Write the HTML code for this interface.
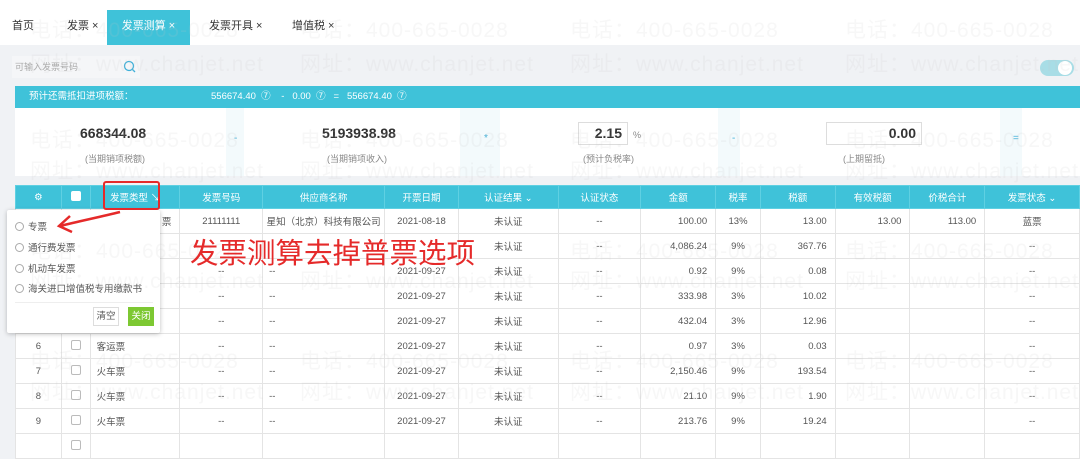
<!DOCTYPE html>
<html><head><meta charset="utf-8"><style>
*{margin:0;padding:0;box-sizing:border-box}
body{width:1080px;height:439px;overflow:hidden;background:#f0f2f5;font-family:"Liberation Sans","Noto Sans CJK SC",sans-serif;font-size:10px;color:#555;position:relative}
.a{position:absolute}
.tabs{top:0;left:0;width:1080px;height:45px;background:#fff}
.tab{top:10px;height:35px;line-height:32px;font-size:11px;color:#333}
.wm{position:absolute;color:rgba(200,200,200,.14);font-size:21px;white-space:nowrap;letter-spacing:1px;z-index:5;pointer-events:none}
table{position:absolute;left:15px;top:185px;border-collapse:collapse;table-layout:fixed;background:#fff}
td,th{height:25px;border:1px solid #e4e4e4;font-weight:normal;text-align:center;font-size:9.5px;color:#555;white-space:nowrap;overflow:hidden}
th{background:#3fc2d9;color:#fff;height:23px;border-color:#5fd0e2}
td.r{text-align:right;padding-right:8px}
td.l{text-align:left;padding-left:6px}
.cb{display:inline-block;width:10px;height:10px;border:1px solid #bbb;border-radius:2px}
.rad{display:inline-block;width:9px;height:9px;border:1px solid #aaa;border-radius:50%;vertical-align:-1px;margin-right:4px}
</style></head><body>
<div class="a tabs"></div>
<div class="a tab" style="left:12px">首页</div>
<div class="a tab" style="left:67px">发票 ×</div>
<div class="a tab" style="left:107px;width:83px;background:#3fc2d9;color:#fff;text-align:center">发票测算 ×</div>
<div class="a tab" style="left:209px">发票开具 ×</div>
<div class="a tab" style="left:292px">增值税 ×</div>
<div class="a" style="left:12px;top:56px;width:128px;height:22px;background:#f5f6f8;font-size:9px;color:#aaa;line-height:22px;padding-left:3px">可输入发票号码</div>
<svg class="a" style="left:123px;top:60px" width="13" height="13"><circle cx="6" cy="6" r="4.5" fill="none" stroke="#3fb0d9" stroke-width="1.3"/><line x1="9" y1="9" x2="12" y2="12" stroke="#3fb0d9" stroke-width="1.3"/></svg>
<div class="a" style="left:1040px;top:60px;width:34px;height:16px;border-radius:8px;background:#a8dde6"></div>
<div class="a" style="left:1058px;top:61px;width:14px;height:14px;border-radius:50%;background:#fff"></div>
<div class="a" style="left:15px;top:86px;width:1065px;height:22px;background:#3fc2d9;color:#fff;font-size:9.5px;line-height:22px">
<span class="a" style="left:14px">预计还需抵扣进项税额：</span><span class="a" style="left:196px">556674.40 &nbsp;⑦ &nbsp;&nbsp;&nbsp;- &nbsp;&nbsp;0.00 &nbsp;⑦ &nbsp;&nbsp;= &nbsp;&nbsp;556674.40 &nbsp;⑦</span></div>
<div class="a" style="left:15px;top:108px;width:1065px;height:68px;background:#fff"></div>
<div class="a" style="left:226px;top:108px;width:18px;height:68px;background:#f3fafc"></div>
<div class="a" style="left:460px;top:108px;width:40px;height:68px;background:#f3fafc"></div>
<div class="a" style="left:718px;top:108px;width:22px;height:68px;background:#f3fafc"></div>
<div class="a" style="left:1000px;top:108px;width:22px;height:68px;background:#f3fafc"></div>
<div class="a" style="left:80px;top:125px;font-size:14px;font-weight:bold;color:#333">668344.08</div>
<div class="a" style="left:85px;top:152px;font-size:9px;color:#888">(当期销项税额)</div>
<div class="a" style="left:234px;top:133px;color:#3fb0d9">-</div>
<div class="a" style="left:322px;top:125px;font-size:14px;font-weight:bold;color:#333">5193938.98</div>
<div class="a" style="left:327px;top:152px;font-size:9px;color:#888">(当期销项收入)</div>
<div class="a" style="left:484px;top:133px;color:#3fb0d9">*</div>
<div class="a" style="left:578px;top:122px;width:50px;height:23px;border:1px solid #ddd;font-size:14px;font-weight:bold;color:#333;text-align:right;padding-right:5px;line-height:21px">2.15</div>
<div class="a" style="left:633px;top:130px;font-size:9px;color:#888">%</div>
<div class="a" style="left:583px;top:152px;font-size:9px;color:#888">(预计负税率)</div>
<div class="a" style="left:732px;top:133px;color:#3fb0d9">-</div>
<div class="a" style="left:826px;top:122px;width:96px;height:23px;border:1px solid #ddd;font-size:14px;font-weight:bold;color:#333;text-align:right;padding-right:5px;line-height:21px">0.00</div>
<div class="a" style="left:843px;top:152px;font-size:9px;color:#888">(上期留抵)</div>
<div class="a" style="left:1013px;top:133px;color:#3fb0d9">=</div>
<table>
<colgroup><col style="width:46px"><col style="width:29px"><col style="width:90px"><col style="width:83px"><col style="width:122px"><col style="width:74px"><col style="width:100px"><col style="width:83px"><col style="width:75px"><col style="width:45px"><col style="width:75px"><col style="width:75px"><col style="width:75px"><col style="width:95px"></colgroup>
<tr><th>⚙</th><th><span class="cb" style="background:#fff;border-color:#fff"></span></th><th>发票类型 ↘</th><th>发票号码</th><th>供应商名称</th><th>开票日期</th><th>认证结果 ⌄</th><th>认证状态</th><th>金额</th><th>税率</th><th>税额</th><th>有效税额</th><th>价税合计</th><th>发票状态 ⌄</th></tr>
<tr><td></td><td></td><td class="r">票</td><td>21111111</td><td>星知（北京）科技有限公司</td><td>2021-08-18</td><td>未认证</td><td>--</td><td class="r">100.00</td><td>13%</td><td class="r">13.00</td><td class="r">13.00</td><td class="r">113.00</td><td>蓝票</td></tr>
<tr><td></td><td></td><td></td><td></td><td></td><td></td><td>未认证</td><td>--</td><td class="r">4,086.24</td><td>9%</td><td class="r">367.76</td><td></td><td></td><td>--</td></tr>
<tr><td></td><td></td><td></td><td>--</td><td class="l">--</td><td>2021-09-27</td><td>未认证</td><td>--</td><td class="r">0.92</td><td>9%</td><td class="r">0.08</td><td></td><td></td><td>--</td></tr>
<tr><td></td><td></td><td></td><td>--</td><td class="l">--</td><td>2021-09-27</td><td>未认证</td><td>--</td><td class="r">333.98</td><td>3%</td><td class="r">10.02</td><td></td><td></td><td>--</td></tr>
<tr><td></td><td></td><td></td><td>--</td><td class="l">--</td><td>2021-09-27</td><td>未认证</td><td>--</td><td class="r">432.04</td><td>3%</td><td class="r">12.96</td><td></td><td></td><td>--</td></tr>
<tr><td>6</td><td><span class="cb"></span></td><td class="l">客运票</td><td>--</td><td class="l">--</td><td>2021-09-27</td><td>未认证</td><td>--</td><td class="r">0.97</td><td>3%</td><td class="r">0.03</td><td></td><td></td><td>--</td></tr>
<tr><td>7</td><td><span class="cb"></span></td><td class="l">火车票</td><td>--</td><td class="l">--</td><td>2021-09-27</td><td>未认证</td><td>--</td><td class="r">2,150.46</td><td>9%</td><td class="r">193.54</td><td></td><td></td><td>--</td></tr>
<tr><td>8</td><td><span class="cb"></span></td><td class="l">火车票</td><td>--</td><td class="l">--</td><td>2021-09-27</td><td>未认证</td><td>--</td><td class="r">21.10</td><td>9%</td><td class="r">1.90</td><td></td><td></td><td>--</td></tr>
<tr><td>9</td><td><span class="cb"></span></td><td class="l">火车票</td><td>--</td><td class="l">--</td><td>2021-09-27</td><td>未认证</td><td>--</td><td class="r">213.76</td><td>9%</td><td class="r">19.24</td><td></td><td></td><td>--</td></tr>
<tr><td></td><td><span class="cb"></span></td><td></td><td></td><td></td><td></td><td></td><td></td><td></td><td></td><td></td><td></td><td></td><td></td></tr>
</table>
<div class="a" style="left:7px;top:210px;width:153px;height:123px;background:#fff;box-shadow:0 1px 5px rgba(0,0,0,.25);border-radius:2px;font-size:9.5px;color:#555">
<div class="a" style="left:8px;top:9px"><span class="rad"></span>专票</div>
<div class="a" style="left:8px;top:30px"><span class="rad"></span>通行费发票</div>
<div class="a" style="left:8px;top:51px"><span class="rad"></span>机动车发票</div>
<div class="a" style="left:8px;top:71px"><span class="rad"></span>海关进口增值税专用缴款书</div>
<div class="a" style="left:8px;top:92px;width:138px;border-top:1px solid #eee"></div>
<div class="a" style="left:86px;top:97px;width:26px;height:19px;border:1px solid #ddd;text-align:center;line-height:17px">清空</div>
<div class="a" style="left:121px;top:97px;width:26px;height:19px;background:#7dc832;color:#fff;text-align:center;line-height:19px">关闭</div>
</div>
<div class="a" style="left:103px;top:181px;width:57px;height:29px;border:2px solid #e52a2a;border-radius:3px;z-index:6"></div>
<svg class="a" style="left:50px;top:205px;z-index:6" width="80" height="30"><path d="M70 7 C50 12 30 16 10 21" stroke="#e52a2a" stroke-width="2.5" fill="none"/><path d="M20 11 L9 21 L22 27" stroke="#e52a2a" stroke-width="2.5" fill="none"/></svg>
<div class="a" style="left:190px;top:231px;font-size:28.5px;color:#e52a2a;z-index:6;white-space:nowrap">发票测算去掉普票选项</div>
<div class="wm" style="left:30px;top:14px">电话：400-665-0028</div><div class="wm" style="left:300px;top:14px">电话：400-665-0028</div><div class="wm" style="left:570px;top:14px">电话：400-665-0028</div><div class="wm" style="left:845px;top:14px">电话：400-665-0028</div>
<div class="wm" style="left:30px;top:48px">网址：www.chanjet.net</div><div class="wm" style="left:300px;top:48px">网址：www.chanjet.net</div><div class="wm" style="left:570px;top:48px">网址：www.chanjet.net</div><div class="wm" style="left:845px;top:48px">网址：www.chanjet.net</div>
<div class="wm" style="left:30px;top:124px">电话：400-665-0028</div><div class="wm" style="left:300px;top:124px">电话：400-665-0028</div><div class="wm" style="left:570px;top:124px">电话：400-665-0028</div><div class="wm" style="left:845px;top:124px">电话：400-665-0028</div>
<div class="wm" style="left:30px;top:155px">网址：www.chanjet.net</div><div class="wm" style="left:300px;top:155px">网址：www.chanjet.net</div><div class="wm" style="left:570px;top:155px">网址：www.chanjet.net</div><div class="wm" style="left:845px;top:155px">网址：www.chanjet.net</div>
<div class="wm" style="left:30px;top:235px">电话：400-665-0028</div><div class="wm" style="left:570px;top:235px">电话：400-665-0028</div><div class="wm" style="left:845px;top:235px">电话：400-665-0028</div>
<div class="wm" style="left:30px;top:265px">网址：www.chanjet.net</div><div class="wm" style="left:300px;top:265px">网址：www.chanjet.net</div><div class="wm" style="left:570px;top:265px">网址：www.chanjet.net</div><div class="wm" style="left:845px;top:265px">网址：www.chanjet.net</div>
<div class="wm" style="left:30px;top:345px">电话：400-665-0028</div><div class="wm" style="left:300px;top:345px">电话：400-665-0028</div><div class="wm" style="left:570px;top:345px">电话：400-665-0028</div><div class="wm" style="left:845px;top:345px">电话：400-665-0028</div>
<div class="wm" style="left:30px;top:376px">网址：www.chanjet.net</div><div class="wm" style="left:300px;top:376px">网址：www.chanjet.net</div><div class="wm" style="left:570px;top:376px">网址：www.chanjet.net</div><div class="wm" style="left:845px;top:376px">网址：www.chanjet.net</div>
</body></html>
